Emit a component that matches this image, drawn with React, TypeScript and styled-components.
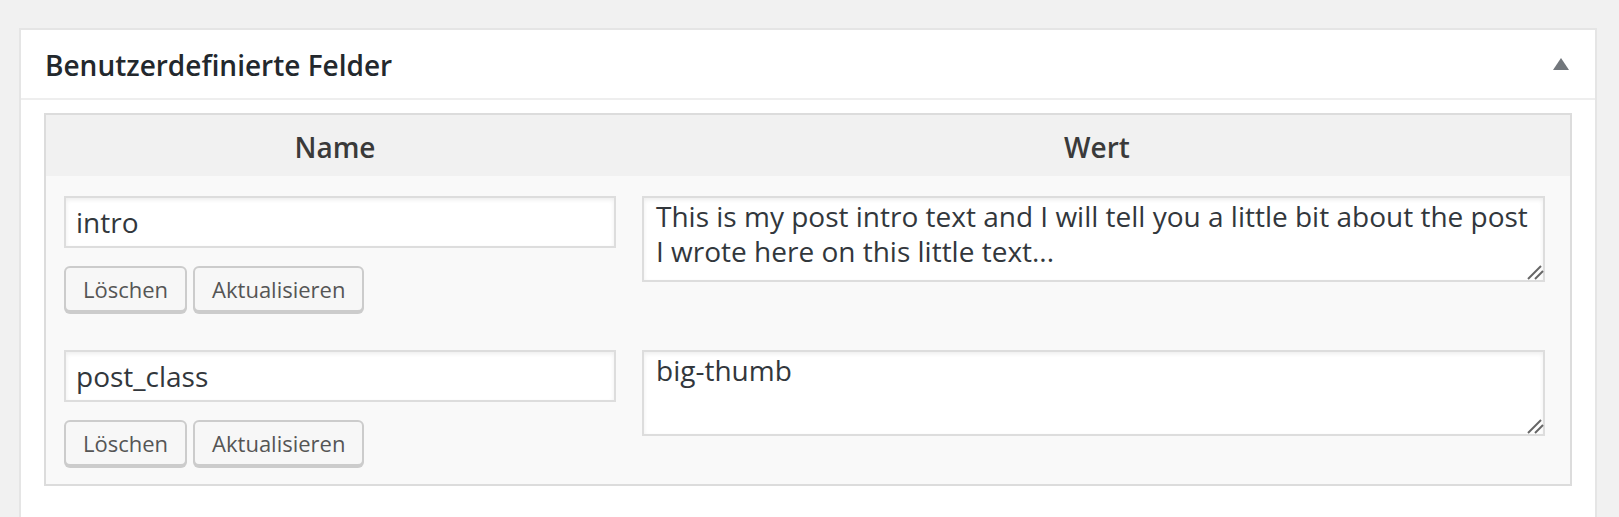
import React from "react";
import styled, { createGlobalStyle } from "styled-components";

const Global = createGlobalStyle`
  html, body {
    margin: 0;
    padding: 0;
    background: #f1f1f1;
    font-family: "Open Sans", "Noto Sans", sans-serif;
    color: #32373c;
  }
  * { box-sizing: border-box; }
`;

const Page = styled.div`
  padding: 28px 22px 0 19px;
  height: 517px;
  overflow: hidden;
`;

const Panel = styled.section`
  background: #fff;
  border: 2px solid #e5e5e5;
  min-height: 520px;
`;

const PanelHeader = styled.div`
  display: flex;
  align-items: center;
  justify-content: space-between;
  height: 70px;
  padding: 0 26px 0 24px;
  border-bottom: 2px solid #eeeeee;
`;

const Title = styled.h2`
  margin: 0;
  font-size: 28px;
  font-weight: 600;
  color: #23282d;
  line-height: 1;
  padding-top: 2px;
`;

const Toggle = styled.svg`
  width: 16px;
  height: 12px;
  display: block;
`;

const PanelBody = styled.div`
  padding: 13px 23px 0 23px;
`;

const FieldTable = styled.div`
  border: 2px solid #dcdcdc;
  background: #f9f9f9;
`;

const Row = styled.div<{ $head?: boolean }>`
  display: grid;
  grid-template-columns: 578px 1fr;
  background: ${(p) => (p.$head ? "#f1f1f1" : "#f9f9f9")};
`;

const HeadCell = styled.div`
  height: 61px;
  display: flex;
  align-items: center;
  justify-content: center;
  font-size: 28px;
  font-weight: 600;
  color: #3a3a3a;
  padding-top: 2px;
`;

const NameCell = styled.div`
  padding: 20px 8px 16px 18px;
  display: flex;
  flex-direction: column;
  gap: 18px;
`;

const ValueCell = styled.div`
  padding: 20px 25px 16px 18px;
`;

const TextInput = styled.input`
  width: 552px;
  height: 52px;
  border: 2px solid #dddddd;
  box-shadow: inset 0 2px 4px rgba(0, 0, 0, 0.07);
  background: #fff;
  font-family: inherit;
  font-size: 28px;
  color: #32373c;
  padding: 0 10px;
  margin: 0;
  outline: none;
`;

const AreaWrap = styled.div`
  position: relative;
`;

const TextArea = styled.textarea`
  display: block;
  width: 100%;
  height: 86px;
  border: 2px solid #dddddd;
  box-shadow: inset 0 2px 4px rgba(0, 0, 0, 0.07);
  background: #fff;
  font-family: inherit;
  font-size: 28px;
  line-height: 35px;
  color: #32373c;
  padding: 1px 12px;
  margin: 0;
  resize: none;
  overflow: hidden;
  outline: none;
`;

const Grip = styled.svg`
  position: absolute;
  right: 0;
  bottom: 0;
  width: 20px;
  height: 20px;
  pointer-events: none;
`;

const Buttons = styled.div`
  display: flex;
  gap: 6px;
`;

const Button = styled.button`
  height: 46px;
  margin: 0 0 2px;
  padding: 0 17px;
  border: 2px solid #cccccc;
  border-radius: 6px;
  background: #f7f7f7;
  box-shadow: 0 2px 0 #cccccc;
  font-family: inherit;
  font-size: 22px;
  color: #555555;
  cursor: pointer;
`;

const rows = [
  {
    name: "intro",
    value:
      "This is my post intro text and I will tell you a little bit about the post I wrote here on this little text...",
  },
  { name: "post_class", value: "big-thumb" },
];

export default function App() {
  return (
    <>
      <Global />
      <Page>
        <Panel>
          <PanelHeader>
            <Title>Benutzerdefinierte Felder</Title>
            <Toggle viewBox="0 0 16 12">
              <polygon points="8,0 16,12 0,12" fill="#72777c" />
            </Toggle>
          </PanelHeader>
          <PanelBody>
            <FieldTable>
              <Row $head>
                <HeadCell>Name</HeadCell>
                <HeadCell>Wert</HeadCell>
              </Row>
              {rows.map((r) => (
                <Row key={r.name}>
                  <NameCell>
                    <TextInput defaultValue={r.name} />
                    <Buttons>
                      <Button>Löschen</Button>
                      <Button>Aktualisieren</Button>
                    </Buttons>
                  </NameCell>
                  <ValueCell>
                    <AreaWrap>
                      <TextArea defaultValue={r.value} />
                      <Grip viewBox="0 0 20 20">
                        <line x1="3" y1="17" x2="16" y2="4" stroke="#666" strokeWidth="2" />
                        <line x1="10" y1="17" x2="18" y2="9" stroke="#666" strokeWidth="2" />
                      </Grip>
                    </AreaWrap>
                  </ValueCell>
                </Row>
              ))}
            </FieldTable>
          </PanelBody>
        </Panel>
      </Page>
    </>
  );
}
